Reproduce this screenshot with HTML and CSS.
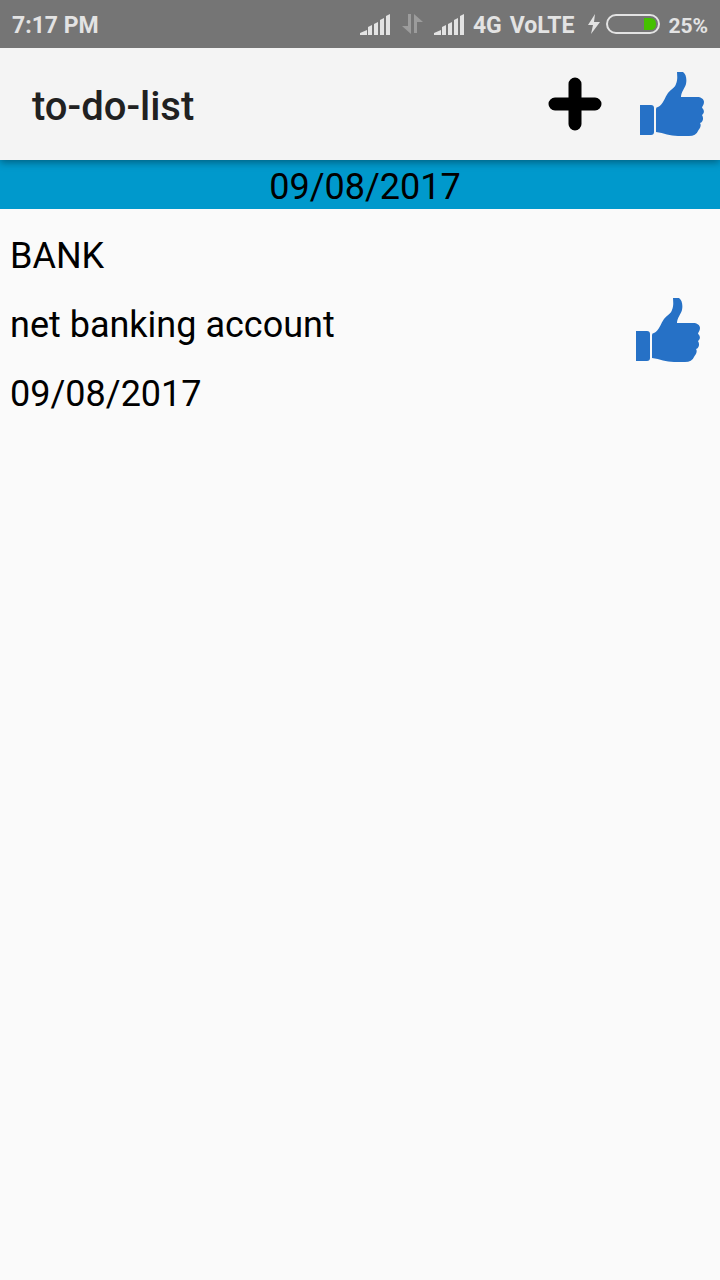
FILE: index.html
```html
<!DOCTYPE html>
<html lang="en">
<head>
<meta charset="utf-8">
<meta name="viewport" content="width=device-width">
<title>to-do-list</title>
<link rel="stylesheet" href="styles.css">
</head>
<body>
<svg class="defs" aria-hidden="true">
  <symbol id="thumb" viewBox="0 0 64 64">
    <path d="M0 33H11Q14 33 14 36V60Q14 63 11 63H0Z"/>
    <path d="M16 37Q16 35 18 35C23 33 25 25 28 21C31 17 35 16 36 12C38 7 37 3 37 0H43C46 2 47 7 46 12C45 16 41 20 41 25H57C61 25 64 27 64 30C64 33 62 34 62 36C64 37 65 41 62 43C64 46 63 50 60 51C62 54 59 57 58 59Q56 64 49 64H38C30 64 24 61 16 60Z"/>
  </symbol>
  <symbol id="signal" viewBox="0 0 31 21">
    <path d="M0 21V19L7 16V21ZM8 21V13L12 11V21ZM14 21V10L18 8V21ZM20 21V6L24 4V21ZM26 21V2L30 0V21Z"/>
  </symbol>
</svg>
<header class="status">
  <span class="clock">7:17 PM</span>
  <svg class="signal"><use href="#signal"/></svg>
  <svg class="transfer" viewBox="0 0 21 20"><path d="M6 0H9V20L0 12H6ZM12 0L21 8H15V19H12Z"/></svg>
  <svg class="signal"><use href="#signal"/></svg>
  <span class="network">4G</span>
  <span class="volte">VoLTE</span>
  <svg class="bolt" viewBox="0 0 12 20"><path d="M7 0L0 11H5L3 20L12 8H6Z"/></svg>
  <svg class="battery" viewBox="0 0 54 20"><rect class="shell" x="1" y="1" width="52" height="18" rx="9"/><path class="charge" d="M38 4H44Q50 4 50 10T44 16H38Z"/></svg>
  <span class="percent">25%</span>
</header>
<nav class="appbar">
  <h1 class="title">to-do-list</h1>
  <button class="icon-button" type="button" aria-label="Add task"><svg class="icon" viewBox="0 0 64 64"><path class="plus" d="M31 12V52M11 32H51"/></svg></button>
  <button class="icon-button" type="button" aria-label="Completed tasks"><svg class="icon"><use href="#thumb"/></svg></button>
</nav>
<main>
  <h2 class="day">09/08/2017</h2>
  <article class="task">
    <div class="details">
      <h3 class="line">BANK</h3>
      <p class="line">net banking account</p>
      <p class="line">09/08/2017</p>
    </div>
    <button class="icon-button" type="button" aria-label="Mark BANK as done"><svg class="icon"><use href="#thumb"/></svg></button>
  </article>
</main>
</body>
</html>
```
FILE: styles.css
```css
* { box-sizing: border-box; }
body {
  margin: 0;
  min-height: 100vh;
  background: #fafafa;
  color: #000;
  font-family: Roboto, sans-serif;
  font-size: 36px;
}
h1, h2, h3, p { margin: 0; font-weight: 400; font-size: inherit; }
svg { display: block; flex: none; }
.defs { position: absolute; width: 0; height: 0; }
.status {
  position: relative;
  z-index: 1;
  display: flex;
  align-items: center;
  height: 48px;
  padding: 0 12px;
  background: #757575;
  color: #e3e3e3;
  fill: #e3e3e3;
  font-size: 23px;
  font-weight: 700;
  line-height: 26px;
  white-space: nowrap;
}
.status span { padding-top: 3px; }
.clock { margin-right: auto; }
.signal { width: 31px; height: 21px; }
.transfer { width: 21px; height: 20px; margin: 0 11px; fill: #9c9c9c; }
.network { margin-left: 8px; }
.volte { margin-left: 8px; }
.bolt { width: 12px; height: 20px; margin-left: 14px; }
.battery { width: 54px; height: 20px; margin: 0 8px 0 6px; }
.shell { fill: none; stroke: #e3e3e3; stroke-width: 2; }
.charge { fill: #45c100; }
.status .percent { font-size: 21px; }
.appbar {
  position: relative;
  display: flex;
  align-items: center;
  gap: 32px;
  height: 112px;
  padding: 0 16px 0 32px;
  background: #f4f4f4;
  box-shadow: 0 2px 8px rgba(0, 0, 0, 0.4);
}
.title {
  flex: 1;
  color: #212121;
  font-size: 40px;
  font-weight: 500;
  line-height: 48px;
  padding-top: 6px;
}
.icon-button { padding: 0; border: 0; background: none; cursor: pointer; }
.icon { width: 64px; height: 64px; fill: #2671c6; }
.plus { fill: none; stroke: #000; stroke-width: 13; stroke-linecap: round; }
.day {
  padding: 6px 0 1px 10px;
  background: #0099cc;
  line-height: 42px;
  text-align: center;
}
.task {
  display: flex;
  align-items: center;
  padding: 15px 20px 15px 10px;
}
.details {
  flex: 1;
  display: grid;
  gap: 20px;
  padding: 8px 0 16px;
}
.line { line-height: 49px; }
```
